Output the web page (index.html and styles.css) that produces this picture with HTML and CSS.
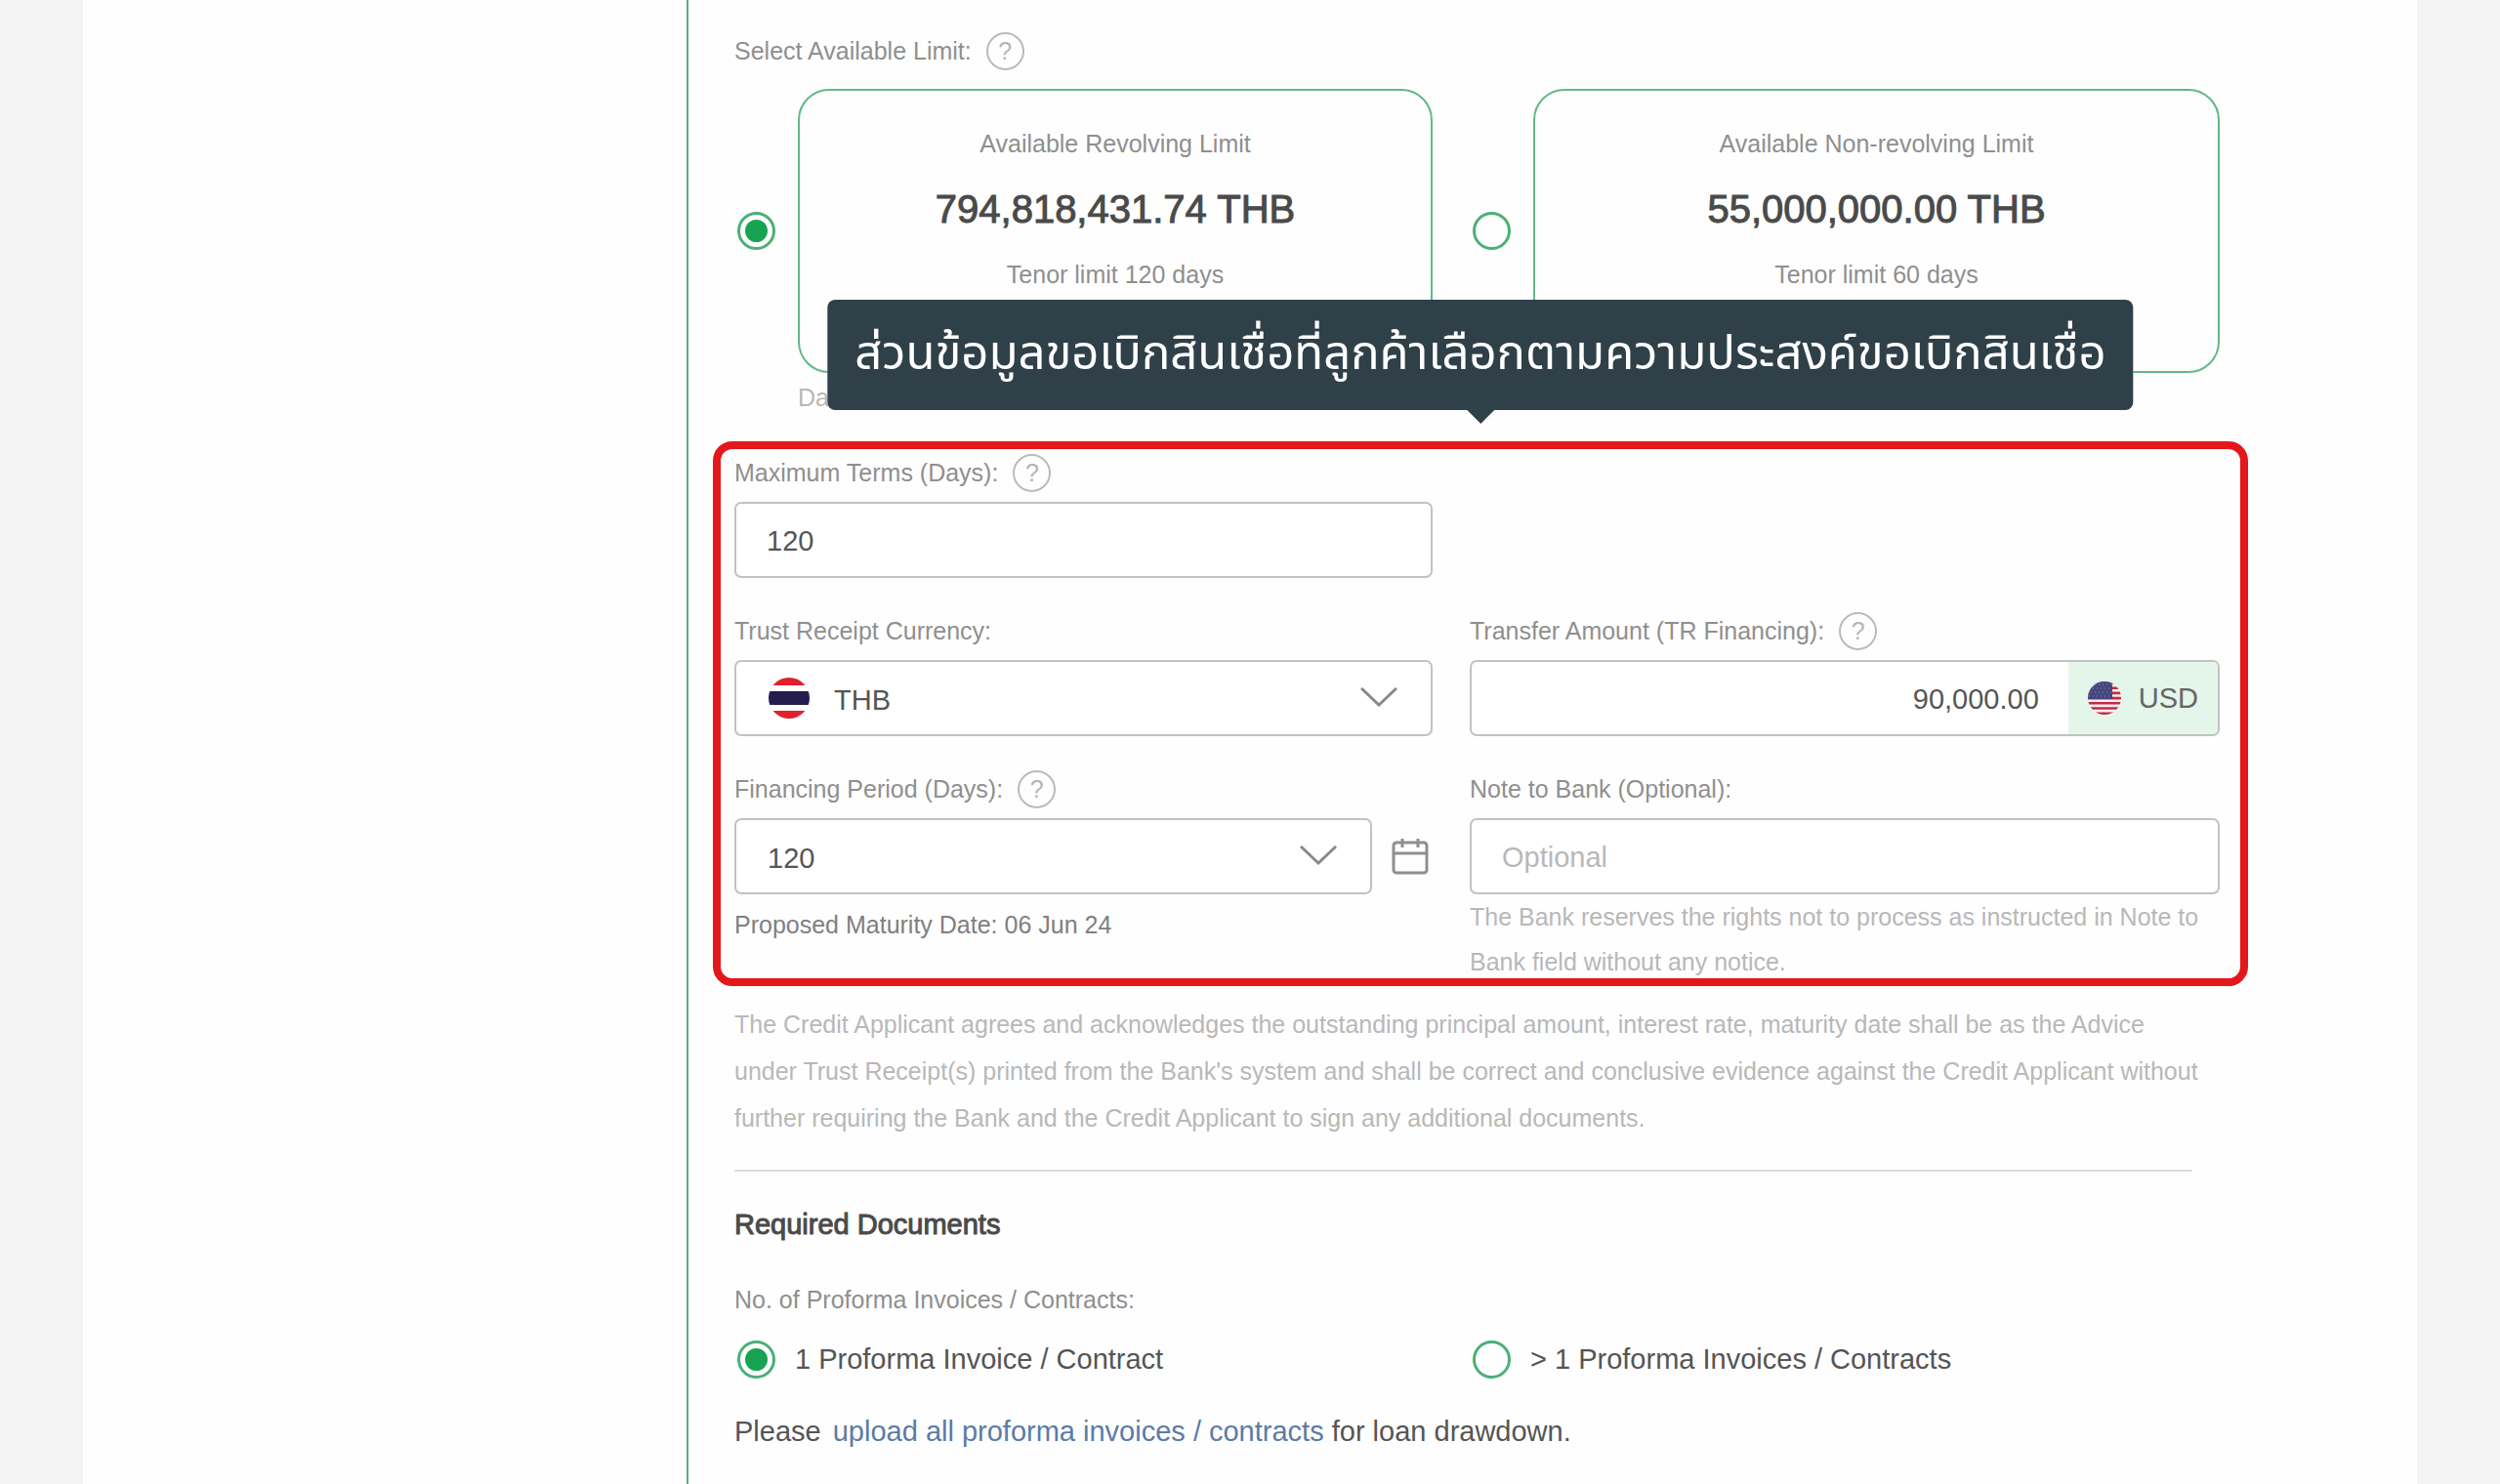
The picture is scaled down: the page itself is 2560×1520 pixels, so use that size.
FILE: index.html
```html
<!DOCTYPE html>
<html lang="en">
<head>
  <meta charset="UTF-8">
  <meta name="viewport" content="width=device-width, initial-scale=1.0">
  <title>Trust Receipt Drawdown</title>
  <link rel="stylesheet" href="styles.css">
</head>
<body>
  <div class="page">
    <form class="form">
      <div class="label-row">
        <span class="label">Select Available Limit:</span>
        <button type="button" class="help" aria-label="Help">?</button>
      </div>

      <!-- Limit cards -->
      <div class="columns">
        <div class="limit">
          <input type="radio" class="radio" name="limit" id="revolving" checked>
          <label class="limit-card" for="revolving">
            <span class="label">Available Revolving Limit</span>
            <span class="amount">794,818,431.74 THB</span>
            <span class="label">Tenor limit 120 days</span>
          </label>
        </div>
        <div class="limit">
          <input type="radio" class="radio" name="limit" id="nonRevolving">
          <label class="limit-card" for="nonRevolving">
            <span class="label">Available Non-revolving Limit</span>
            <span class="amount">55,000,000.00 THB</span>
            <span class="label">Tenor limit 60 days</span>
          </label>
        </div>
      </div>
      <p class="data-date">Da</p>

      <!-- Drawdown details -->
      <div class="highlight">
        <div class="tooltip" lang="th">ส่วนข้อมูลขอเบิกสินเชื่อที่ลูกค้าเลือกตามความประสงค์ขอเบิกสินเชื่อ</div>

        <div class="columns">
          <div class="field">
            <div class="label-row">
              <label class="label" for="maxTerms">Maximum Terms (Days):</label>
              <button type="button" class="help" aria-label="Help">?</button>
            </div>
            <input type="text" class="control" id="maxTerms" value="120">
          </div>
        </div>

        <div class="columns">
          <div class="field">
            <div class="label-row">
              <label class="label" for="currency">Trust Receipt Currency:</label>
            </div>
            <div class="select-wrap has-flag">
              <svg class="flag-th" viewBox="0 0 42 42">
                <clipPath id="thClip"><circle cx="21" cy="21" r="21"/></clipPath>
                <g clip-path="url(#thClip)">
                  <rect width="42" height="42" fill="#fff"/>
                  <rect width="42" height="8" fill="#e0202c"/>
                  <rect y="14" width="42" height="14" fill="#251d50"/>
                  <rect y="34" width="42" height="8" fill="#e0202c"/>
                </g>
              </svg>
              <select class="control" id="currency">
                <option>THB</option>
                <option>USD</option>
              </select>
              <svg class="chevron" viewBox="0 0 38 20"><path d="M1 1l18 17L37 1"/></svg>
            </div>
          </div>
          <div class="field">
            <div class="label-row">
              <label class="label" for="transferAmount">Transfer Amount (TR Financing):</label>
              <button type="button" class="help" aria-label="Help">?</button>
            </div>
            <div class="amount-group">
              <input type="text" id="transferAmount" value="90,000.00">
              <div class="unit">
                <svg class="flag-us" viewBox="0 0 34 34">
                  <clipPath id="usClip"><circle cx="17" cy="17" r="17"/></clipPath>
                  <g clip-path="url(#usClip)">
                    <rect width="34" height="34" fill="#f7eef0"/>
                    <path d="M0 1.5h34M0 6.7h34M0 11.9h34M0 17.1h34M0 22.3h34M0 27.5h34M0 32.7h34" stroke="#c22b43" stroke-width="2.6"/>
                    <rect width="25" height="18" fill="#46467f"/>
                    <path d="M3 3h21M1 7h21M3 11h21M1 15h21" stroke="#8f8fb8" stroke-width="1" stroke-dasharray="1 3"/>
                  </g>
                </svg>
                <span>USD</span>
              </div>
            </div>
          </div>
        </div>

        <div class="columns">
          <div class="field">
            <div class="label-row">
              <label class="label" for="period">Financing Period (Days):</label>
              <button type="button" class="help" aria-label="Help">?</button>
            </div>
            <div class="period">
              <div class="select-wrap">
                <select class="control" id="period">
                  <option>120</option>
                  <option>90</option>
                </select>
                <svg class="chevron" viewBox="0 0 38 20"><path d="M1 1l18 17L37 1"/></svg>
              </div>
              <button type="button" class="calendar" aria-label="Choose date">
                <svg viewBox="0 0 38 38"><rect x="2" y="5" width="34" height="31" rx="3"/><path d="M2 16h34M11 1v9M27 1v9"/></svg>
              </button>
            </div>
            <p class="maturity">Proposed Maturity Date: 06 Jun 24</p>
          </div>
          <div class="field">
            <div class="label-row">
              <label class="label" for="note">Note to Bank (Optional):</label>
            </div>
            <input type="text" class="control" id="note" placeholder="Optional">
            <p class="hint">The Bank reserves the rights not to process as instructed in Note to Bank field without any notice.</p>
          </div>
        </div>
      </div>

      <p class="terms">The Credit Applicant agrees and acknowledges the outstanding principal amount, interest rate, maturity date shall be as the Advice under Trust Receipt(s) printed from the Bank's system and shall be correct and conclusive evidence against the Credit Applicant without further requiring the Bank and the Credit Applicant to sign any additional documents.</p>
      <hr>

      <!-- Required documents -->
      <h2>Required Documents</h2>
      <p class="label">No. of Proforma Invoices / Contracts:</p>
      <div class="columns choices">
        <div class="choice">
          <input type="radio" class="radio" name="invoices" id="oneInvoice" checked>
          <label for="oneInvoice">1 Proforma Invoice / Contract</label>
        </div>
        <div class="choice">
          <input type="radio" class="radio" name="invoices" id="manyInvoices">
          <label for="manyInvoices">&gt; 1 Proforma Invoices / Contracts</label>
        </div>
      </div>
      <p class="upload">Please <a href="#upload">upload all proforma invoices / contracts</a> for loan drawdown.</p>
    </form>
  </div>
</body>
</html>
```
FILE: styles.css
```css
* {
  box-sizing: border-box;
}

body {
  margin: 0;
  background-color: #f4f4f4;
  color: #555;
  font-family: "Liberation Sans", Arial, sans-serif;
  font-size: 29px;
}

p,
h2 {
  margin: 0;
}

button,
input,
select {
  font: inherit;
  color: inherit;
}

.page {
  min-height: 100vh;
  margin: 0 85px;
  padding-left: 618px;
  background-color: #fefefe;
  display: flex;
}

.form {
  flex: 1;
  padding: 32px 202px 24px 47px;
  border-left: 2px solid #56b07d;
}

.columns {
  display: grid;
  grid-template-columns: 715fr 768fr;
  column-gap: 38px;
}

.label-row {
  display: flex;
  align-items: center;
  gap: 15px;
  height: 40px;
}

.label {
  color: #8f8f8f;
  font-size: 25px;
  line-height: 40px;
}

.help {
  width: 39px;
  height: 39px;
  padding: 0;
  border: 2px solid #bbb;
  border-radius: 50%;
  background: none;
  color: #b5b5b5;
  font-size: 25px;
  line-height: 35px;
}

/* Radio buttons */
.radio {
  appearance: none;
  flex: none;
  width: 39px;
  height: 39px;
  margin: 0 0 0 3px;
  padding: 5px;
  border: 3px solid #4bb077;
  border-radius: 50%;
}

.radio:checked {
  background: #16a452 content-box;
}

/* Limit cards */
.limit {
  display: flex;
  align-items: center;
  gap: 23px;
  margin-top: 19px;
}

.limit-card {
  flex: 1;
  display: flex;
  flex-direction: column;
  gap: 23px;
  height: 291px;
  padding-top: 34px;
  border: 2px solid #62b888;
  border-radius: 32px;
  text-align: center;
}

.amount {
  color: #4a4a4a;
  font-size: 40px;
  line-height: 48px;
  -webkit-text-stroke: 1px #4a4a4a;
}

.data-date {
  margin: 2px 0 22px 65px;
  color: #b8b8b8;
  font-size: 25px;
  line-height: 46px;
}

/* Highlighted block */
.highlight {
  position: relative;
  margin: 0 -29px 0 -22px;
  padding: 4px 21px 0 14px;
  border: 8px solid #e4171b;
  border-radius: 20px;
}

.tooltip {
  position: absolute;
  left: 50%;
  bottom: calc(100% + 40px);
  transform: translateX(-50%);
  padding: 0 28px;
  border-radius: 8px;
  background-color: #2f4049;
  color: #fff;
  font-family: "Noto Sans Thai", "Noto Sans", sans-serif;
  font-size: 49px;
  line-height: 113px;
  white-space: nowrap;
}

.tooltip::after {
  content: "";
  position: absolute;
  top: 100%;
  left: 50%;
  margin-left: -14px;
  border: 14px solid transparent;
  border-top-color: #2f4049;
  border-bottom: 0;
}

.highlight .columns + .columns {
  margin-top: 34px;
}

.control,
.amount-group {
  display: block;
  width: 100%;
  height: 78px;
  border: 2px solid #c2c2c2;
  border-radius: 7px;
  background-color: #fff;
}

.label-row + .control,
.label-row + .select-wrap,
.label-row + .amount-group,
.label-row + .period {
  margin-top: 10px;
}

.control {
  padding: 3px 30px 0 32px;
}

input.control {
  padding-left: 31px;
}

.control::placeholder {
  color: #b8b8b8;
}

select.control {
  appearance: none;
}

.select-wrap {
  position: relative;
  flex: 1;
}

.has-flag .control {
  padding-left: 100px;
}

.flag-th {
  position: absolute;
  top: 18px;
  left: 35px;
  width: 42px;
  height: 42px;
}

.chevron {
  position: absolute;
  top: 28px;
  right: 36px;
  width: 38px;
  height: 20px;
  fill: none;
  stroke: #8a8a8a;
  stroke-width: 3;
  pointer-events: none;
}

.amount-group {
  display: flex;
  overflow: hidden;
}

.amount-group input {
  flex: 1;
  min-width: 0;
  padding: 3px 30px 0;
  border: 0;
  background: none;
  text-align: right;
}

.unit {
  display: flex;
  align-items: center;
  gap: 18px;
  padding: 0 20px;
  background-color: #e4f5ea;
  color: #666;
}

.flag-us {
  width: 34px;
  height: 34px;
}

.period {
  display: flex;
  align-items: center;
}

.calendar {
  width: 62px;
  height: 38px;
  padding: 0 4px 0 20px;
  border: 0;
  background: none;
}

.calendar svg {
  display: block;
  width: 38px;
  height: 38px;
  fill: none;
  stroke: #8f8f8f;
  stroke-width: 3;
}

.maturity {
  margin-top: 8px;
  color: #808080;
  font-size: 25px;
  line-height: 46px;
}

.hint {
  margin-bottom: -6px;
  color: #b8b8b8;
  font-size: 25px;
  line-height: 46px;
}

.terms {
  margin: 15px 14px 0 0;
  color: #b8b8b8;
  font-size: 25px;
  line-height: 48px;
}

hr {
  height: 2px;
  margin: 29px 28px 0 0;
  border: 0;
  background-color: #ddd;
}

/* Required documents */
h2 {
  margin: 34px 0 37px;
  color: #4a4a4a;
  font-size: 29px;
  font-weight: normal;
  line-height: 40px;
  -webkit-text-stroke: 1px #4a4a4a;
}

.choices {
  margin-top: 22px;
}

.choice {
  display: flex;
  align-items: center;
  gap: 20px;
}

.upload {
  margin-top: 34px;
  line-height: 40px;
}

.upload a {
  margin-left: 4px;
  color: #5b7ba8;
  text-decoration: none;
}
```
